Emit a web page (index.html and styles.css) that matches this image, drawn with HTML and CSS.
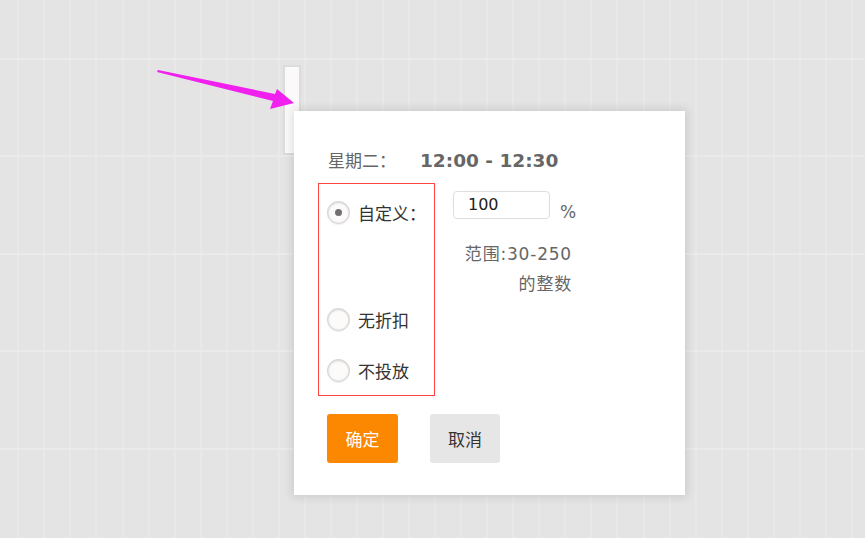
FILE: index.html
```html
<!DOCTYPE html>
<html lang="zh-CN">
<head>
<meta charset="utf-8">
<title>投放设置</title>
<link rel="stylesheet" href="styles.css">
</head>
<body>
<div class="canvas">
  <div class="slot"></div>

  <svg class="arrow" width="865" height="538" viewBox="0 0 865 538" aria-hidden="true">
    <polygon points="158,70 275,94 277,89 294,103 270,109 273,101 157,72" fill="#f020ef"/>
  </svg>

  <div class="popup">
    <div class="title">星期二：<span class="time">12:00 - 12:30</span></div>

    <div class="body">
      <div class="choices">
        <label class="choice first"><span class="radio checked"></span>自定义：</label>
        <label class="choice second"><span class="radio"></span>无折扣</label>
        <label class="choice third"><span class="radio"></span>不投放</label>
      </div>

      <div class="custom">
        <div class="value-row">
          <div class="input">100</div>
          <span class="unit">%</span>
        </div>
        <div class="hint">范围:30-250<br>的整数</div>
      </div>
    </div>

    <div class="actions">
      <button class="btn ok">确定</button>
      <button class="btn cancel">取消</button>
    </div>
  </div>
</div>
</body>
</html>
```

FILE: styles.css
```css
html, body {
  margin: 0;
  padding: 0;
  height: 100%;
}

body {
  font-family: "DejaVu Sans", "Noto Sans CJK SC", sans-serif;
  font-size: 16px;
  color: #333;
  background-color: #e4e4e4;
  background-image:
    repeating-linear-gradient(180deg, transparent 0 58px, #eaeaea 58px 60px, transparent 60px 97.5px),
    repeating-linear-gradient(90deg, transparent 0 17.3px, #e8e8e8 17.3px 19.3px, transparent 19.3px 26.05px);
}

.canvas {
  position: relative;
  width: 865px;
  height: 538px;
  overflow: hidden;
}

.slot {
  position: absolute;
  left: 283px;
  top: 65px;
  width: 14px;
  height: 86px;
  background: #fbf9f9;
  border: 2px solid #dcdcdc;
}

.arrow {
  position: absolute;
  left: 0;
  top: 0;
  z-index: 3;
  pointer-events: none;
}

.popup {
  position: absolute;
  left: 294px;
  top: 111px;
  width: 391px;
  box-sizing: border-box;
  padding: 37px 24px 32px;
  background: #fff;
  box-shadow: 0 0 9px 2px rgba(0, 0, 0, 0.11);
  z-index: 2;
}

.title {
  margin-left: 10px;
  height: 24px;
  line-height: 24px;
  color: #666;
  font-family: "Noto Sans CJK SC", sans-serif;
  font-size: 17px;
  white-space: nowrap;
}

.time {
  margin-left: 24px;
  font-family: "DejaVu Sans", sans-serif;
  font-weight: bold;
  font-size: 18.5px;
  color: #666;
}

.body {
  display: flex;
  align-items: flex-start;
  margin-top: 11px;
}

.choices {
  width: 117px;
  height: 213px;
  box-sizing: border-box;
  border: 1px solid #f44;
  padding-left: 8px;
}

.choice {
  display: flex;
  align-items: center;
  height: 24px;
  gap: 8px;
  color: #333;
  font-family: "Noto Sans CJK SC", sans-serif;
  font-size: 17px;
  white-space: nowrap;
}

.choice.first { margin-top: 16px; }
.choice.second { margin-top: 83px; }
.choice.third { margin-top: 27px; }

.radio {
  position: relative;
  flex: none;
  width: 21px;
  height: 21px;
  border-radius: 50%;
  border: 1px solid #cfcfcf;
  background: radial-gradient(circle at 50% 50%, #fdfafa 55%, #e6e4e4 100%);
  box-shadow: inset 0 1px 2px rgba(0, 0, 0, 0.12), 0 1px 1px rgba(0, 0, 0, 0.06);
}

.radio.checked::after {
  content: "";
  position: absolute;
  left: 50%;
  top: 50%;
  width: 7px;
  height: 7px;
  margin: -3.5px 0 0 -3.5px;
  border-radius: 50%;
  background: #707070;
}

.custom {
  margin-left: 18px;
  margin-top: 8px;
}

.value-row {
  display: flex;
  align-items: flex-start;
}

.input {
  width: 97px;
  height: 28px;
  box-sizing: border-box;
  border: 1px solid #dedede;
  border-radius: 4px;
  padding-left: 14px;
  line-height: 26px;
  color: #222;
  font-size: 16px;
}

.unit {
  margin-left: 10px;
  margin-top: 11px;
  line-height: 20px;
  color: #666;
  font-size: 17px;
}

.hint {
  width: 109px;
  margin-left: 10px;
  margin-top: 17px;
  line-height: 30px;
  text-align: right;
  color: #666;
  font-size: 17px;
  letter-spacing: 0.8px;
  white-space: nowrap;
}

.actions {
  display: flex;
  gap: 32px;
  margin-top: 18px;
  margin-left: 9px;
}

.btn {
  height: 49px;
  border: none;
  border-radius: 3px;
  padding: 0;
  font-family: "Noto Sans CJK SC", sans-serif;
  font-size: 17px;
  cursor: pointer;
}

.btn.ok {
  width: 71px;
  background: #fc8700;
  color: #fff;
}

.btn.cancel {
  width: 70px;
  background: #e6e6e6;
  color: #333;
}
```
